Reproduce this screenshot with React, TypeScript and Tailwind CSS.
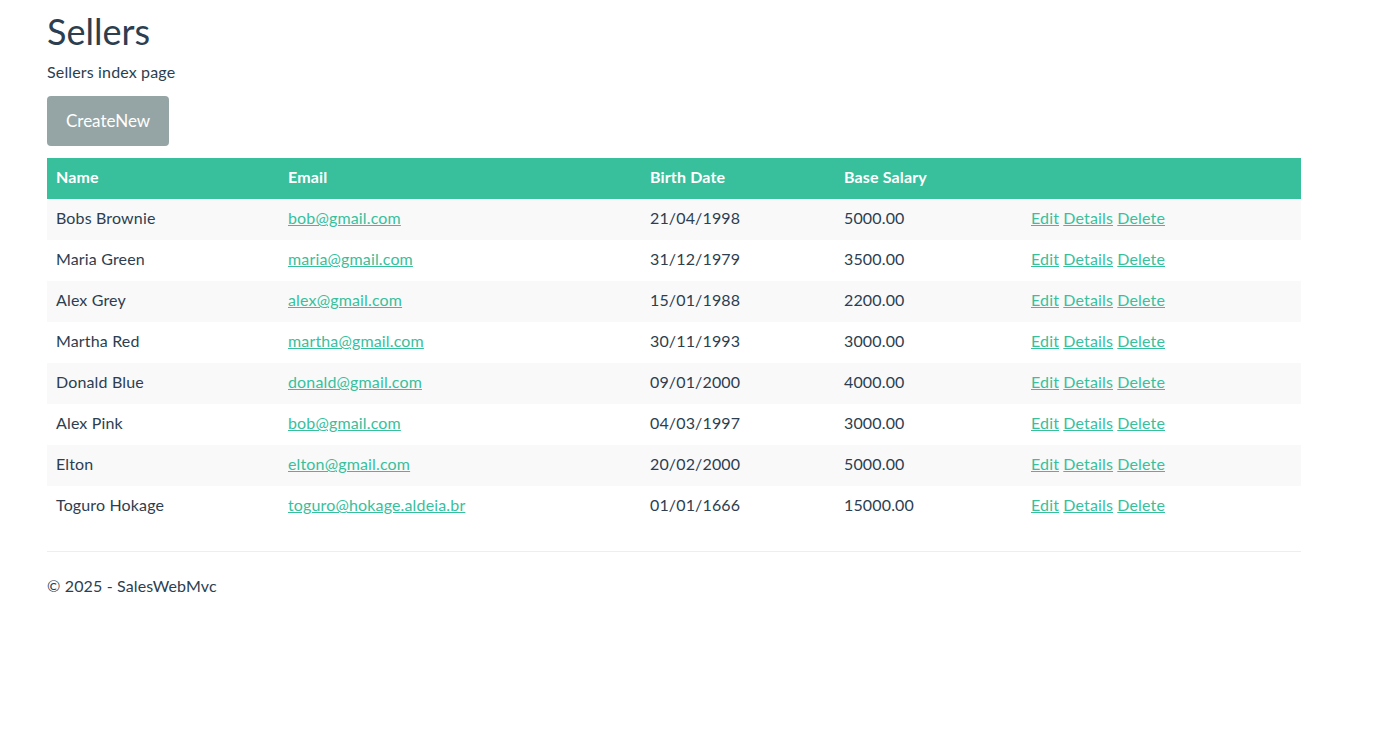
const sellers = [
  { name: 'Bobs Brownie', email: 'bob@gmail.com', birth: '21/04/1998', salary: '5000.00' },
  { name: 'Maria Green', email: 'maria@gmail.com', birth: '31/12/1979', salary: '3500.00' },
  { name: 'Alex Grey', email: 'alex@gmail.com', birth: '15/01/1988', salary: '2200.00' },
  { name: 'Martha Red', email: 'martha@gmail.com', birth: '30/11/1993', salary: '3000.00' },
  { name: 'Donald Blue', email: 'donald@gmail.com', birth: '09/01/2000', salary: '4000.00' },
  { name: 'Alex Pink', email: 'bob@gmail.com', birth: '04/03/1997', salary: '3000.00' },
  { name: 'Elton', email: 'elton@gmail.com', birth: '20/02/2000', salary: '5000.00' },
  { name: 'Toguro Hokage', email: 'toguro@hokage.aldeia.br', birth: '01/01/1666', salary: '15000.00' },
]

export default function App() {
  return (
    <div className="min-h-screen bg-white text-[#2c3e50] font-['Lato',sans-serif] text-base tracking-[0.15px]">
      <div className="ml-[47px] w-[1254px]">
        <h1 className="text-[36px] leading-[43px] pt-[10px] mb-[7px] font-normal tracking-normal">Sellers</h1>
        <p className="leading-6 mb-[12px]">Sellers index page</p>
        <a className="inline-block bg-[#95a5a6] text-white text-[17px] leading-[26px] px-[19px] py-[12px] rounded-[4px] tracking-normal">
          CreateNew
        </a>
        <table className="w-full mt-[12px] border-collapse">
          <thead>
            <tr className="bg-[#38c09d] text-white font-bold text-left [&>th]:align-top [&>th]:pt-[7px] [&>th]:px-[9px] [&>th]:leading-6">
              <th className="w-[232px] h-[41px]">Name</th>
              <th className="w-[362px]">Email</th>
              <th className="w-[194px]">Birth Date</th>
              <th className="w-[187px]">Base Salary</th>
              <th></th>
            </tr>
          </thead>
          <tbody>
            {sellers.map((s, i) => (
              <tr
                key={i}
                className={`[&>td]:align-top [&>td]:pt-[7px] [&>td]:px-[9px] [&>td]:leading-6 ${i % 2 === 0 ? 'bg-[#f9f9f9]' : 'bg-white'}`}
              >
                <td className="h-[41px]">{s.name}</td>
                <td>
                  <a className="text-[#38c09d] underline">{s.email}</a>
                </td>
                <td>{s.birth}</td>
                <td>{s.salary}</td>
                <td>
                  <a className="text-[#38c09d] underline">Edit</a>{' '}
                  <a className="text-[#38c09d] underline">Details</a>{' '}
                  <a className="text-[#38c09d] underline">Delete</a>
                </td>
              </tr>
            ))}
          </tbody>
        </table>
        <hr className="mt-[24px] border-t border-[#eeeeee]" />
        <footer className="pt-[22px] leading-6">© 2025 - SalesWebMvc</footer>
      </div>
    </div>
  )
}
